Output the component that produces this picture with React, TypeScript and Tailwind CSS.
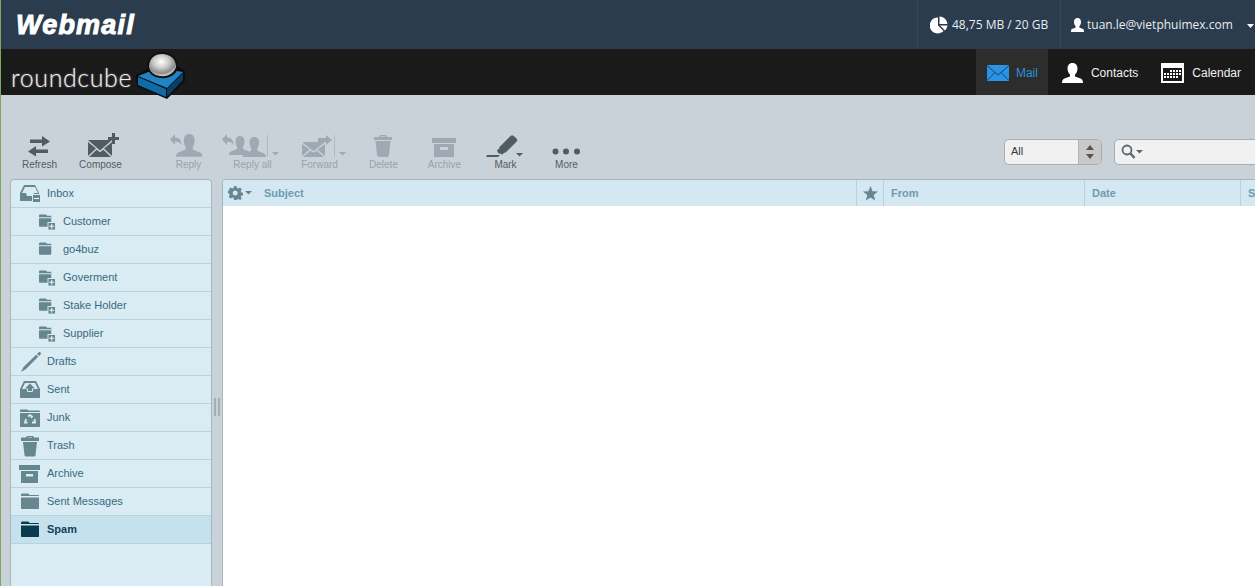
import React from 'react';

const ON = '#4f5c63';
const OFF = '#9ea9b3';

const Caret = ({ x, y, color }: { x: number; y: number; color: string }) => (
  <path d={`M${x} ${y}h7l-3.500 3.500z`} fill={color} />
);

const Person = ({ x, y, color, s = 1 }: { x: number; y: number; color: string; s?: number }) => (
  <g transform={`translate(${x} ${y}) scale(${s})`} fill={color}>
    <path d="M6 0c3 0 4.500 2 4.500 5.500 0 2.500-1 4.500-1.500 5.500v2l6 2.500c1 .5 2 1.500 2 3.500H-5c0-2 1-3 2-3.500L3 13v-2C2.500 10 1.500 8 1.500 5.500 1.500 2 3 0 6 0z" />
  </g>
);

const ReplyArrow = ({ x, y, color }: { x: number; y: number; color: string }) => (
  <path transform={`translate(${x} ${y})`} d="M5 0v3.500c4 0 6.500 2.500 6.500 7.500-1.500-3-3.500-3.500-6.500-3.500V11L0 5.500z" fill={color} />
);

const Envelope = ({ x, y, w, h, color }: { x: number; y: number; w: number; h: number; color: string }) => (
  <g>
    <path d={`M${x} ${y}L${x + w / 2} ${y + h * 0.62}L${x + w} ${y}z`} fill={color} />
    <path d={`M${x} ${y + 2}V${y + h - 1}L${x + w * 0.33} ${y + h * 0.5}z`} fill={color} />
    <path d={`M${x + w} ${y + 2}V${y + h - 1}L${x + w * 0.67} ${y + h * 0.5}z`} fill={color} />
    <path d={`M${x + 1} ${y + h}L${x + w * 0.36} ${y + h * 0.58}L${x + w / 2} ${y + h * 0.72}L${x + w * 0.64} ${y + h * 0.58}L${x + w - 1} ${y + h}z`} fill={color} />
  </g>
);

// toolbar icons are drawn in page coordinates, the viewBox is the button's slot
const toolbarIcons: Record<string, React.ReactNode> = {
  Refresh: (
    <g fill={ON}>
      <path d="M30 139.500h12V136l8 5.500-8 5v-3.500H30z" />
      <path d="M48 149.500H36V146l-8 5.500 8 5V153h12z" />
    </g>
  ),
  Compose: (
    <g>
      <Envelope x={88} y={140} w={24} h={17} color={ON} />
      <path d="M112 133h3v4h4v3h-4v4h-3v-4h-4v-3h4z" fill={ON} />
    </g>
  ),
  Reply: (
    <g>
      <ReplyArrow x={170} y={134} color={OFF} />
      <Person x={182} y={134} color={OFF} s={1.2} />
    </g>
  ),
  'Reply all': (
    <g>
      <ReplyArrow x={222} y={134} color={OFF} />
      <Person x={234} y={136} color={OFF} s={1} />
      <Person x={248} y={137} color={OFF} s={1.050} />
      <rect x={267} y={135} width={1} height={22} fill={OFF} opacity={0.6} />
      <Caret x={272} y={152} color={OFF} />
    </g>
  ),
  Forward: (
    <g>
      <Envelope x={302} y={142} w={23} h={15} color={OFF} />
      <path d="M318 138h8v-3l6 5-6 5v-3h-8z" fill={OFF} />
      <rect x={334} y={135} width={1} height={22} fill={OFF} opacity={0.6} />
      <Caret x={339} y={152} color={OFF} />
    </g>
  ),
  Delete: (
    <path
      d="M379 137c0-1.500 1-2 2-2h4c1 0 2 .5 2 2h5v3h-18v-3zm2 0h4v-.700h-4zM375.500 141h15l-1.500 14c0 1-1 2-2 2h-8c-1 0-2-1-2-2z"
      fill={OFF}
      fillRule="evenodd"
    />
  ),
  Archive: (
    <path d="M432 138h24v5h-24zM434 144h20v13h-20zM440 147v3h8v-3z" fill={OFF} fillRule="evenodd" />
  ),
  Mark: (
    <g fill={ON}>
      <path d="M487 155h13l-2 2h-12z" />
      <path d="M498 153l-1-3 2-1 .5-2 11-11c1-1 2-1 3-.2l3 2.700c1 1 1 2 .2 3l-11 11-2 .5-1 1.500z" />
      <Caret x={516} y={153} color={ON} />
    </g>
  ),
  More: (
    <g fill={ON}>
      <circle cx={555.500} cy={151.500} r={3} />
      <circle cx={566} cy={151.500} r={3} />
      <circle cx={577} cy={151.500} r={3} />
    </g>
  ),
};

const toolbarButtons = [
  { label: 'Refresh', left: 9, enabled: true },
  { label: 'Compose', left: 70, enabled: true },
  { label: 'Reply', left: 158, enabled: false },
  { label: 'Reply all', left: 222, enabled: false },
  { label: 'Forward', left: 289, enabled: false },
  { label: 'Delete', left: 353, enabled: false },
  { label: 'Archive', left: 414, enabled: false },
  { label: 'Mark', left: 475, enabled: true },
  { label: 'More', left: 536, enabled: true },
];

const ToolbarButton = ({ label, left, enabled }: { label: string; left: number; enabled: boolean }) => (
  <div className="flex w-[61px] shrink-0 flex-col items-center">
    <svg width="61" height="25" viewBox={`${left} 133 61 25`} className="overflow-visible">
      {toolbarIcons[label]}
    </svg>
    <span className={`mt-px text-[10px] leading-[12px] ${enabled ? 'text-[#555c60]' : 'text-[#98a2aa]'}`}>{label}</span>
  </div>
);

const FOLDER = '#66878f';

const FolderShape = ({ color = FOLDER }: { color?: string }) => (
  <path d="M3 4c0-1 .5-1.500 1.500-1.500h5c1 0 1.500.5 2 1.500h8.500c.7 0 1 .3 1 1H3zM3 6.500h18V17c0 .7-.3 1-1 1H4c-.7 0-1-.3-1-1z" fill={color} />
);

const PlusBadge = () => (
  <g>
    <rect x="9.500" y="9.500" width="8" height="8" fill="#66878f" stroke="#d9ebf3" strokeWidth="1" />
    <path d="M11 13.500h5M13.500 11v5" stroke="#fff" strokeWidth="1" />
  </g>
);

const SubFolderIcon = ({ plus }: { plus: boolean }) => (
  <svg width="17" height="18" viewBox="0 0 18 18" className="shrink-0">
    <path d="M0 2.500C0 1.500.5 1 1.500 1h5c1 0 1.500.5 2 1.500H13V4H0zM0 5h13v8c0 .6-.4 1-1 1H1c-.6 0-1-.4-1-1z" fill={FOLDER} />
    {plus && <PlusBadge />}
  </svg>
);

const folderIcons: Record<string, React.ReactNode> = {
  Inbox: (
    <g>
      <path d="M6 2h11l4 8v8H2v-8zM7 4l-3 6h4l1 3h6l1-3h4l-3-6z" fill={FOLDER} fillRule="evenodd" />
      <rect x="14.500" y="11.500" width="8" height="8" fill="#66878f" stroke="#d9ebf3" />
      <rect x="16" y="15" width="5" height="1" fill="#fff" />
    </g>
  ),
  Drafts: (
    <path d="M20.500 1.500c.8-.7 1.500-.5 2 0s.7 1.200 0 2L21 5l-2-2zM18.200 3.800l2 2L8 18l-5 3 2.500-5z" fill={FOLDER} />
  ),
  Sent: (
    <path d="M6 2h12l4 8v8c0 .7-.3 1-1 1H3c-.7 0-1-.3-1-1v-8zM7 4l-3 6h4.500l1 3h5l1-3H20l-3-6zM12 4.500l5 5h-3V12h-4V9.500H7z" fill={FOLDER} fillRule="evenodd" />
  ),
  Junk: (
    <g>
      <path d="M2 3.500C2 3 2.500 2.500 3 2.500h6c.5 0 1 .5 1.500 1H21c.5 0 1 .5 1 1V5H2zM2 6h20v13c0 .5-.5 1-1 1H3c-.5 0-1-.5-1-1z" fill={FOLDER} />
      <path d="M10 9.500l2-1.500 2 1.500-1 1.500M16.500 12l.5 3.500h-3M9.500 15.500H7l1-3.500" fill="none" stroke="#d9ebf3" strokeWidth="1.800" />
    </g>
  ),
  Trash: (
    <path d="M8 2.500c0-1 1-1.500 2-1.500h4c1 0 2 .5 2 1.500h5V6H3V2.500zm2 0h4V2h-4zM5 7h14l-1.500 13c0 1-1 1.500-1.500 1.500H8c-.5 0-1.500-.5-1.500-1.500z" fill={FOLDER} fillRule="evenodd" />
  ),
  Archive: (
    <path d="M1 2h21v5H1zM3 8h17v12H3zM8 11v2.500h7V11z" fill={FOLDER} fillRule="evenodd" />
  ),
  'Sent Messages': <FolderShape />,
  Spam: <FolderShape color="#0a3a4d" />,
};

const folders = [
  { name: 'Inbox' },
  { name: 'Customer', sub: true, plus: true },
  { name: 'go4buz', sub: true },
  { name: 'Goverment', sub: true, plus: true },
  { name: 'Stake Holder', sub: true, plus: true },
  { name: 'Supplier', sub: true, plus: true },
  { name: 'Drafts' },
  { name: 'Sent' },
  { name: 'Junk' },
  { name: 'Trash' },
  { name: 'Archive' },
  { name: 'Sent Messages' },
  { name: 'Spam', selected: true },
];

const FolderRow = ({ name, sub, plus, selected }: { name: string; sub?: boolean; plus?: boolean; selected?: boolean }) => (
  <li
    className={`flex h-[28px] items-center border-b border-[#b8d3dc] text-[11px] ${
      selected ? 'bg-[#c6e1ee] font-bold text-[#0f4358]' : 'text-[#376a80]'
    } ${sub ? 'pl-[28px]' : 'pl-[7px]'}`}
  >
    {sub ? (
      <SubFolderIcon plus={!!plus} />
    ) : (
      <svg width="24" height="22" viewBox="0 0 24 22" className="shrink-0">
        {folderIcons[name]}
      </svg>
    )}
    <span className={sub ? 'ml-[7px]' : 'ml-[5px]'}>{name}</span>
  </li>
);

export default function App() {
  return (
    <div className="flex h-[586px] w-[1255px] flex-col overflow-hidden border-l border-[#7fa65a] bg-[#c9d2d9] font-['Liberation_Sans',sans-serif]">
      {/* top bar */}
      <div className="flex h-[49px] shrink-0 items-stretch bg-[#2b3c4e]">
        <div className="ml-[15px] flex items-center pt-[2px] text-[27px] leading-none font-bold text-white italic tracking-[1.200px] [-webkit-text-stroke:1px_white]">
          Webmail
        </div>
        <div className="ml-auto flex h-full w-[144px] items-center border-x border-[#35485b] pl-[12px] font-['Open_Sans',sans-serif] text-[12px] text-[#e8edf0]">
          <svg width="18" height="18" viewBox="0 0 18 18" className="shrink-0">
            <path d="M8 1.500V9.500l5.500 5.500A8 8 0 1 1 8 1.500z" fill="#fff" />
            <path d="M9.500 0.500A8 8 0 0 1 17.500 8H9.500z" fill="#fff" />
            <path d="M10 9.500h7.500a8 8 0 0 1-2.500 5z" fill="#fff" />
          </svg>
          <span className="ml-[4px]">48,75 MB / 20 GB</span>
        </div>
        <div className="flex h-full w-[194px] items-center pl-[10px] font-['Open_Sans',sans-serif] text-[12px] text-[#e8edf0]">
          <svg width="13" height="14" viewBox="0 0 13 14" className="shrink-0">
            <path d="M6.500 0C9 0 10 1.800 10 4c0 2-.8 3.500-1.700 4.300v1.200L12 11c.7.300 1 1.200 1 3H0c0-1.800.3-2.700 1-3l3.700-1.500V8.300C3.800 7.500 3 6 3 4c0-2.200 1-4 3.500-4z" fill="#fff" />
          </svg>
          <span className="ml-[3px]">tuan.le@vietphuimex.com</span>
          <svg width="7" height="4" viewBox="0 0 7 4" className="ml-[14px] mt-[3px] shrink-0">
            <path d="M0 0h7L3.500 4z" fill="#fff" />
          </svg>
        </div>
      </div>

      {/* roundcube bar */}
      <div className="flex h-[46px] shrink-0 items-stretch bg-[#1a1a1a]">
        <div className="ml-[10px] mt-[14px] w-[120px] font-['Lato',sans-serif] text-[25px] leading-[28px] font-light tracking-[0.600px] text-[#f0f0f0] [text-shadow:0_0_2px_#999]">
          roundcube
        </div>
        <svg width="50" height="48" viewBox="137 51 50 48" className="relative z-10 ml-[5px] mt-[2px] shrink-0">
          <defs>
            <radialGradient id="dome" cx="0.450" cy="0.350" r="0.650">
              <stop offset="0" stopColor="#ffffff" />
              <stop offset="0.450" stopColor="#c9c9c9" />
              <stop offset="0.800" stopColor="#8b8b8b" />
              <stop offset="1" stopColor="#d8d8d8" />
            </radialGradient>
          </defs>
          <path d="M137 75L154 66L172 62L186 71V81L168 99L138 86z" fill="#0b0b0b" />
          <path d="M139 76L160 68L184 72L168 88z" fill="#1f83c4" />
          <path d="M139 77L167 89V97L139 85z" fill="#0f6aa8" />
          <path d="M168 89L184 73V80L168 97z" fill="#0a3f66" />
          <path d="M148 67C148 57 155 52 163 52C172 52 179 58 179 68C177 75 170 79 161 78C154 77 149 73 148 67z" fill="#111" />
          <path d="M150 67C150 58 156 54 163 54C171 54 177 59 177 67C175 73 169 77 161 76C155 75 151 72 150 67z" fill="url(#dome)" />
        </svg>
        <div className="ml-auto flex h-full items-stretch pr-[14px] text-[12px]">
          <div className="flex w-[72px] items-center bg-[#2d2d2d] pl-[11px] pt-[2px] text-[#2c90dd]">
            <svg width="22" height="16" viewBox="0 0 22 16" className="shrink-0">
              <rect width="22" height="16" fill="#2a93e6" />
              <path d="M0 0.500L11 10L22 .5M0 15.500L8 7.500M22 15.500L14 7.500" fill="none" stroke="#11304a" strokeWidth="0.800" />
            </svg>
            <span className="ml-[7px]">Mail</span>
          </div>
          <div className="flex items-center pl-[14px] pt-[2px] text-[#f0f0f0]">
            <svg width="21" height="20" viewBox="0 0 21 20" className="shrink-0">
              <path d="M10.500 0c3.500 0 5 2.500 5 5.500 0 2.500-1 5-2.500 6v2l5.500 2c1.500.5 2.500 2 2.500 4.500H0c0-2.500 1-4 2.500-4.500l5.500-2v-2c-1.500-1-2.500-3.500-2.500-6 0-3 1.500-5.500 5-5.500z" fill="#fff" />
            </svg>
            <span className="ml-[8px]">Contacts</span>
          </div>
          <div className="ml-[23px] flex items-center pt-[2px] text-[#f0f0f0]">
            <svg width="23" height="20" viewBox="0 0 23 20" className="shrink-0">
              <rect width="23" height="20" fill="#fff" />
              <rect x="2" y="5" width="19" height="13" fill="#1a1a1a" />
              <path d="M9 7h2v2H9zM12 7h2v2h-2zM15 7h2v2h-2zM18 7h2v2h-2zM3 10h2v2H3zM6 10h2v2H6zM9 10h2v2H9zM12 10h2v2h-2zM15 10h2v2h-2zM18 10h2v2h-2zM3 13h2v2H3zM6 13h2v2H6zM9 13h2v2H9zM12 13h2v2h-2zM15 13h2v2h-2z" fill="#fff" />
            </svg>
            <span className="ml-[8px]">Calendar</span>
          </div>
        </div>
      </div>

      {/* toolbar */}
      <div className="flex h-[84px] shrink-0 pl-[8px]">
        <div className="flex pt-[38px]">
          {toolbarButtons.map((b, i) => (
            <div key={b.label} className={`flex ${i === 2 ? 'ml-[27px]' : i === 3 ? 'ml-[3px]' : i === 4 ? 'ml-[6px]' : i === 5 ? 'ml-[3px]' : ''}`}>
              <ToolbarButton {...b} />
            </div>
          ))}
        </div>
        <div className="ml-[407px] flex shrink-0 pt-[44px]">
          <div className="flex h-[26px] w-[98px] overflow-hidden rounded-[5px] border border-[#a9adb0] bg-[#f1f1f1]">
            <span className="flex-1 pl-[6px] text-[11px] leading-[23px] text-[#2f3a40]">All</span>
            <span className="flex w-[23px] flex-col items-center justify-center gap-[2px] border-l border-[#b5b5b5] bg-[#c9c9c9]">
              <svg width="8" height="14" viewBox="0 0 8 14">
                <path d="M4 0l4 5H0zM0 9h8l-4 5z" fill="#555" />
              </svg>
            </span>
          </div>
          <div className="ml-[12px] flex h-[26px] w-[200px] shrink-0 items-center rounded-[5px] border border-[#a9adb0] bg-[#f1f1f1] pl-[6px]">
            <svg width="22" height="16" viewBox="0 0 22 16">
              <circle cx="6" cy="6" r="4.500" fill="none" stroke="#5d666b" strokeWidth="1.800" />
              <path d="M9.500 9.500L13.500 14" stroke="#5d666b" strokeWidth="2.400" />
              <path d="M15 6h7l-3.500 3.500z" fill="#5d666b" />
            </svg>
          </div>
        </div>
      </div>

      {/* content */}
      <div className="flex min-h-0 flex-1 pl-[9px]">
        <div className="w-[202px] shrink-0 overflow-hidden rounded-t-[4px] border-x border-t border-[#a9b5bd] bg-[#d9ebf3]">
          <ul>
            {folders.map((f) => (
              <FolderRow key={f.name} {...f} />
            ))}
          </ul>
        </div>
        <div className="flex w-[10px] shrink-0 items-start justify-center pt-[219px]">
          <div className="h-[18px] w-[6px] border-x-2 border-[#a3adb5]" />
        </div>
        <div className="w-[1100px] shrink-0 overflow-hidden rounded-t-[4px] border-t border-l border-[#a9b5bd] bg-white">
          <div className="flex h-[26px] items-stretch bg-[#d4e8f1] text-[11px] font-bold text-[#6d9bb0]">
            <div className="flex w-[634px] items-center border-r border-[#b8d3dc] pl-[5px]">
              <svg width="25" height="14" viewBox="0 0 25 14" className="shrink-0">
                <path d="M6 0h2.500l.4 2 1.400.6L12 1.500 13.800 3.300 12.700 5l.6 1.400 1.700.4v2.500l-1.700.4-.6 1.400 1.100 1.700L12 14l-1.700-1.100-1.400.6-.4.500H6l-.4-2-1.400-.6-1.700 1.100L.7 10.700 1.800 9l-.6-1.400L-.5 7.200V4.800l1.700-.4.6-1.400L.7 3.300 2.500 1.500l1.700 1.100 1.400-.6zM7.250 4.500a2.500 2.500 0 1 0 0 5 2.500 2.500 0 0 0 0-5z" fill="#66878f" fillRule="evenodd" />
                <path d="M17 5h7l-3.500 3.500z" fill="#66878f" />
              </svg>
              <span className="ml-[11px]">Subject</span>
            </div>
            <div className="flex w-[27px] items-center justify-center border-r border-[#b8d3dc]">
              <svg width="15" height="15" viewBox="0 0 15 15">
                <path d="M7.500 0l2 5.200 5.500.3-4.300 3.500 1.500 5.500-4.700-3-4.700 3 1.500-5.500L0 5.500l5.500-.3z" fill="#66878f" />
              </svg>
            </div>
            <div className="flex w-[201px] items-center border-r border-[#b8d3dc] pl-[7px]">From</div>
            <div className="flex w-[156px] items-center border-r border-[#b8d3dc] pl-[7px]">Date</div>
            <div className="flex flex-1 items-center pl-[7px]">Size</div>
          </div>
        </div>
      </div>
    </div>
  );
}
